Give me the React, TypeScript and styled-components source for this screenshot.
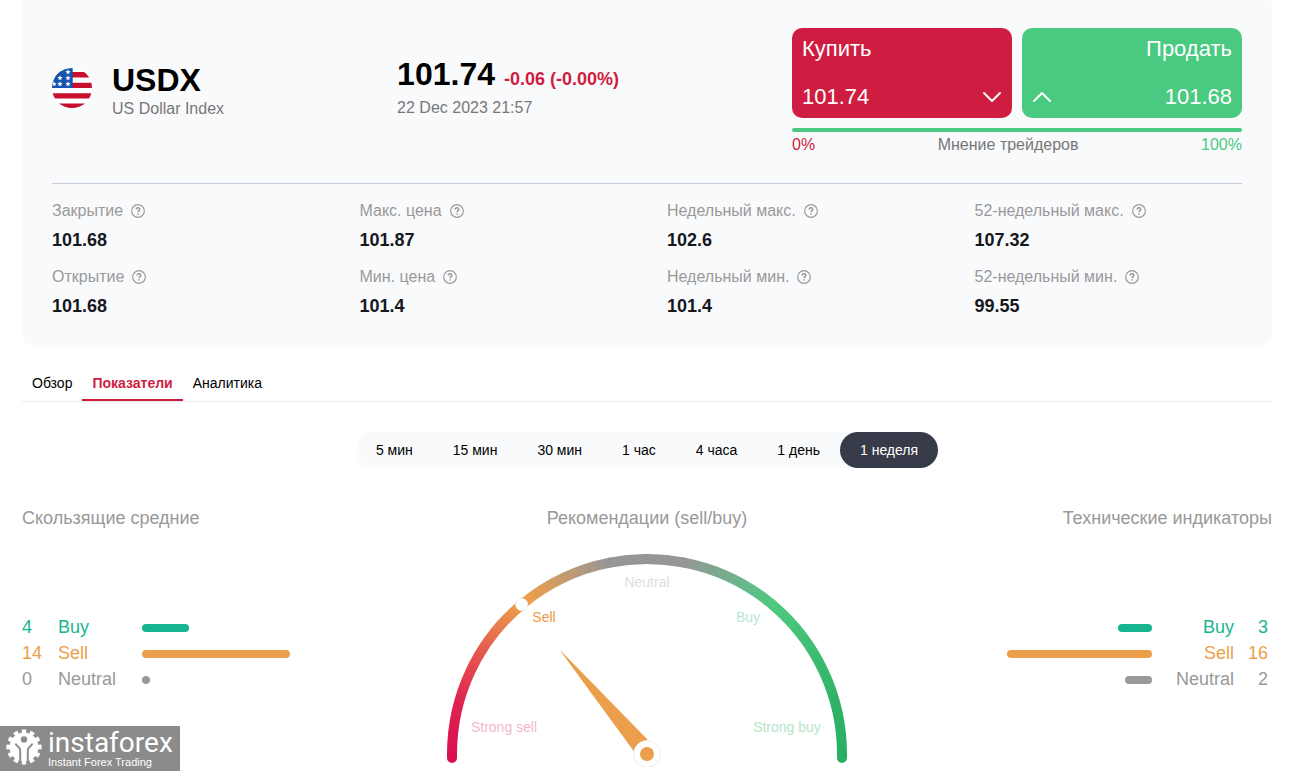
import React from "react";
import styled, { createGlobalStyle } from "styled-components";

const GlobalStyle = createGlobalStyle`
  *, *::before, *::after { box-sizing: border-box; }
  body {
    margin: 0;
    background: #fff;
    color: #000;
    font-family: "Liberation Sans", Arial, sans-serif;
    font-size: 16px;
  }
  h1, h2, p, dl, dd, ul { margin: 0; padding: 0; }
  button { font-family: inherit; border: 0; cursor: pointer; }
`;

const colors = {
  red: "#cf1d41",
  green: "#4ac981",
  teal: "#18b690",
  orange: "#ec9f4b",
  grey: "#999999",
  panel: "#f9fafc",
  dark: "#373a48",
};

const Page = styled.main`
  padding: 0 17px 0 22px;
`;

const Card = styled.section`
  padding: 28px 30px 29px;
  border-radius: 4px 4px 10px 10px;
  background: ${colors.panel};
`;

const CardHeader = styled.header`
  display: grid;
  grid-template-columns: 29% 1fr 450px;
  padding-bottom: 29px;
  border-bottom: 1px solid #c9cbdb;
`;

const Instrument = styled.div`
  display: flex;
  gap: 20px;
  padding-top: 36px;
`;

const Flag = styled.svg`
  width: 40px;
  height: 40px;
  margin-top: 4px;
`;

const Symbol = styled.h1`
  font-size: 32px;
  line-height: 32px;
`;

const Muted = styled.p<{ $gap: number }>`
  margin-top: ${(p) => p.$gap}px;
  line-height: 20px;
  color: #777;
`;

const Quote = styled.div`
  padding-top: 30px;
`;

const PriceLine = styled.div`
  display: flex;
  align-items: baseline;
  gap: 9px;
`;

const Price = styled.strong`
  font-size: 32px;
  line-height: 32px;
`;

const Change = styled.strong`
  font-size: 18px;
  line-height: 20px;
  color: ${colors.red};
`;

const DealButtons = styled.div`
  display: grid;
  grid-template-columns: 1fr 1fr;
  gap: 10px;
`;

const DealButton = styled.button<{ $side: "buy" | "sell" }>`
  display: flex;
  flex-direction: column;
  justify-content: space-between;
  align-items: ${(p) => (p.$side === "buy" ? "flex-start" : "flex-end")};
  height: 90px;
  padding: 9px 10px;
  border-radius: 10px;
  background: ${(p) => (p.$side === "buy" ? colors.red : colors.green)};
  color: #fff;
  font-size: 22px;
  line-height: 24px;
`;

const DealBottom = styled.span<{ $side: "buy" | "sell" }>`
  display: flex;
  flex-direction: ${(p) => (p.$side === "buy" ? "row" : "row-reverse")};
  align-items: center;
  justify-content: space-between;
  width: 100%;
`;

const OpinionBar = styled.div`
  height: 4px;
  margin-top: 10px;
  border-radius: 2px;
  background: ${colors.green};
`;

const OpinionLegend = styled.div`
  display: flex;
  justify-content: space-between;
  margin-top: 4px;
  line-height: 18px;
  color: #777;
`;

const Percent = styled.span<{ $color: string }>`
  color: ${(p) => p.$color};
`;

const Stats = styled.dl`
  display: grid;
  grid-template-columns: repeat(4, 1fr);
  gap: 18px 40px;
  padding-top: 18px;
`;

const StatLabel = styled.dt`
  display: flex;
  align-items: center;
  gap: 8px;
  line-height: 18px;
  color: ${colors.grey};
  white-space: nowrap;
`;

const StatValue = styled.dd`
  margin-top: 10px;
  font-size: 18px;
  font-weight: 700;
  line-height: 20px;
  color: #16181d;
`;

const Tabs = styled.nav`
  display: flex;
  margin-top: 28px;
  border-bottom: 1px solid #ececee;
`;

const Tab = styled.a<{ $active?: boolean }>`
  padding: 0 10px 6px;
  border-bottom: 2px solid ${(p) => (p.$active ? colors.red : "transparent")};
  color: ${(p) => (p.$active ? colors.red : "#000")};
  font-size: 14px;
  font-weight: ${(p) => (p.$active ? 700 : 400)};
  line-height: 20px;
  text-decoration: none;
`;

const Periods = styled.div`
  display: flex;
  width: fit-content;
  margin: 30px auto 0;
  border-radius: 18px;
  background: ${colors.panel};
`;

const Period = styled.button<{ $active?: boolean }>`
  height: 36px;
  padding: 0 20px;
  border-radius: 18px;
  background: ${(p) => (p.$active ? colors.dark : "transparent")};
  color: ${(p) => (p.$active ? "#fff" : "#000")};
  font-size: 14px;
`;

const Indicators = styled.section`
  display: grid;
  grid-template-columns: 1fr 400px 1fr;
  margin-top: 40px;
`;

const Column = styled.div<{ $align: "left" | "center" | "right" }>`
  text-align: ${(p) => p.$align};
`;

const Heading = styled.h2`
  font-size: 18px;
  font-weight: 400;
  line-height: 20px;
  color: ${colors.grey};
`;

const Votes = styled.ul`
  margin-top: 86px;
  list-style: none;
`;

const Vote = styled.li<{ $color: string; $mirrored?: boolean }>`
  display: flex;
  flex-direction: ${(p) => (p.$mirrored ? "row-reverse" : "row")};
  align-items: center;
  padding: ${(p) => (p.$mirrored ? "0 4px 0 0" : "0")};
  color: ${(p) => p.$color};
  font-size: 18px;
  line-height: 26px;
`;

const VoteCount = styled.span<{ $mirrored?: boolean }>`
  width: ${(p) => (p.$mirrored ? 34 : 36)}px;
`;

const VoteName = styled.span<{ $mirrored?: boolean }>`
  width: ${(p) => (p.$mirrored ? 82 : 84)}px;
`;

const VoteBar = styled.span`
  height: 8px;
  margin-top: 2px;
  border-radius: 4px;
  background: currentColor;
`;

const Gauge = styled.svg`
  display: block;
  width: 400px;
  height: 213px;
  margin-top: 26px;
  font-size: 14px;
`;

const Brand = styled.a`
  position: fixed;
  left: 0;
  bottom: 0;
  display: flex;
  gap: 6px;
  width: 180px;
  height: 45px;
  padding: 3px 0 0 6px;
  background: #8b8b8b;
  color: #fff;
  text-decoration: none;
`;

const BrandText = styled.span`
  display: flex;
  flex-direction: column;
`;

const BrandName = styled.span`
  font-family: Roboto, sans-serif;
  font-size: 28px;
  line-height: 28px;
`;

const BrandTagline = styled.span`
  font-size: 11px;
  line-height: 10px;
`;

const stats = [
  ["Закрытие", "101.68"],
  ["Макс. цена", "101.87"],
  ["Недельный макс.", "102.6"],
  ["52-недельный макс.", "107.32"],
  ["Открытие", "101.68"],
  ["Мин. цена", "101.4"],
  ["Недельный мин.", "101.4"],
  ["52-недельный мин.", "99.55"],
];

const periods = ["5 мин", "15 мин", "30 мин", "1 час", "4 часа", "1 день", "1 неделя"];

type VoteItem = { name: string; count: number; color: string; width: number };

const averages: VoteItem[] = [
  { name: "Buy", count: 4, color: colors.teal, width: 47 },
  { name: "Sell", count: 14, color: colors.orange, width: 148 },
  { name: "Neutral", count: 0, color: colors.grey, width: 8 },
];

const technical: VoteItem[] = [
  { name: "Buy", count: 3, color: colors.teal, width: 34 },
  { name: "Sell", count: 16, color: colors.orange, width: 145 },
  { name: "Neutral", count: 2, color: colors.grey, width: 27 },
];

const stars = [
  [16, 4],
  [8, 10],
  [16, 10],
  [2, 16],
  [8, 16],
  [16, 16],
];

const UsFlag = () => (
  <Flag viewBox="0 0 40 40" role="img" aria-label="USA">
    <clipPath id="flag-clip">
      <circle cx="20" cy="20" r="20" />
    </clipPath>
    <g clipPath="url(#flag-clip)">
      <rect width="40" height="40" fill="#fff" />
      <path d="M0 4h40v5.4H0zM0 14.8h40v5.2H0zM0 25.2h40v5.2H0zM0 35.4h40V40H0z" fill="#c8102e" />
      <rect width="20.7" height="20" fill="#1254b0" />
      {stars.map(([x, y]) => (
        <path
          key={`${x}-${y}`}
          transform={`translate(${x} ${y})`}
          d="M0-2.7.75-.9 2.6-.8 1.2.4 1.65 2.3 0 1.3-1.65 2.3-1.2.4-2.6-.8-.75-.9z"
          fill="#fff"
        />
      ))}
    </g>
  </Flag>
);

const HelpIcon = () => (
  <svg width="14" height="14" viewBox="0 0 15 15" fill="none" stroke="#999" aria-hidden="true">
    <circle cx="7.5" cy="7.5" r="6.8" strokeWidth="1.2" />
    <path d="M5.6 6c0-1.3.8-1.9 1.9-1.9s1.9.7 1.9 1.7c0 1.3-1.7 1.3-1.8 2.9" strokeWidth="1.6" />
    <path d="M7.6 9.8v1.5" strokeWidth="1.7" />
  </svg>
);

const Chevron = ({ up }: { up?: boolean }) => (
  <svg width="20" height="12" viewBox="0 0 20 12" fill="none" stroke="#fff" strokeWidth="2" strokeLinecap="round" strokeLinejoin="round" aria-hidden="true">
    <path d={up ? "M2 10l8-8 8 8" : "M2 2l8 8 8-8"} />
  </svg>
);

const VoteList = ({ items, mirrored }: { items: VoteItem[]; mirrored?: boolean }) => (
  <Votes>
    {items.map((item) => (
      <Vote key={item.name} $color={item.color} $mirrored={mirrored}>
        <VoteCount $mirrored={mirrored}>{item.count}</VoteCount>
        <VoteName $mirrored={mirrored}>{item.name}</VoteName>
        <VoteBar style={{ width: item.width }} />
      </Vote>
    ))}
  </Votes>
);

const SentimentGauge = () => (
  <Gauge viewBox="0 0 400 213" role="img" aria-label="Sell">
    <defs>
      <linearGradient id="g-strong-sell" gradientUnits="userSpaceOnUse" x1="5" y1="200" x2="74.7" y2="50.6">
        <stop offset="0" stopColor="#dc0f50" />
        <stop offset="0.3" stopColor="#de2450" />
        <stop offset="0.65" stopColor="#e55c4f" />
        <stop offset="1" stopColor="#ec9f4b" />
      </linearGradient>
      <linearGradient id="g-sell" gradientUnits="userSpaceOnUse" x1="74.7" y1="50.6" x2="162.8" y2="8.6">
        <stop offset="0.1" stopColor="#ec9f4b" />
        <stop offset="1" stopColor="#969696" />
      </linearGradient>
      <linearGradient id="g-buy" gradientUnits="userSpaceOnUse" x1="237.2" y1="8.6" x2="325.3" y2="50.6">
        <stop offset="0" stopColor="#969696" />
        <stop offset="1" stopColor="#4ec982" />
      </linearGradient>
      <linearGradient id="g-strong-buy" gradientUnits="userSpaceOnUse" x1="325.3" y1="50.6" x2="395" y2="200">
        <stop offset="0" stopColor="#4ec982" />
        <stop offset="0.7" stopColor="#2fb266" />
        <stop offset="1" stopColor="#2bb063" />
      </linearGradient>
    </defs>
    <g fill="none" strokeWidth="10" strokeLinecap="round">
      <path d="M5 204V200A195 195 0 0 1 74.7 50.6" stroke="url(#g-strong-sell)" />
      <path d="M395 204V200A195 195 0 0 0 325.3 50.6" stroke="url(#g-strong-buy)" />
      <path d="M74.7 50.6A195 195 0 0 1 162.8 8.6" stroke="url(#g-sell)" />
      <path d="M325.3 50.6A195 195 0 0 0 237.2 8.6" stroke="url(#g-buy)" />
      <path d="M162.8 8.6A195 195 0 0 1 237.2 8.6" stroke="#969696" />
    </g>
    <circle cx="74.7" cy="50.5" r="6.2" fill="#fff" stroke="#dfe3ea" strokeWidth="0.6" />
    <path d="M112 95L200.500 185.500 187 197.500z" fill="#ec9f4b" />
    <circle cx="200" cy="200" r="13.500" fill="#fff" stroke="#e6e6e6" strokeWidth="0.8" />
    <circle cx="200" cy="200" r="7" fill="#ec9f4b" />
    <g textAnchor="middle">
      <text x="200" y="33" fill="#dedede">Neutral</text>
      <text x="97" y="68" fill="#ec9a3f">Sell</text>
      <text x="301" y="68" fill="#b5e8d9">Buy</text>
      <text x="57" y="178" fill="#f6b7cb">Strong sell</text>
      <text x="340" y="178" fill="#b6e6c9">Strong buy</text>
    </g>
  </Gauge>
);

const GearMark = () => (
  <svg width="36" height="36" viewBox="0 0 36 36" aria-hidden="true">
    <circle cx="18" cy="18" r="14.5" fill="#fff" />
    <circle cx="18" cy="18" r="15.6" fill="none" stroke="#fff" strokeWidth="4" strokeDasharray="1.1 0.9" strokeDashoffset="0.55" pathLength={24} />
    <circle cx="18" cy="10.5" r="3.2" fill="#8b8b8b" />
    <path d="M9.500 14.500c1 3 4.700 3 4.700 7V36M26.500 14.500c-1 3-4.700 3-4.700 7V36" fill="none" stroke="#8b8b8b" strokeWidth="2" />
  </svg>
);

export default function App() {
  return (
    <>
      <GlobalStyle />
      <Page>
        <Card>
          <CardHeader>
            <Instrument>
              <UsFlag />
              <div>
                <Symbol>USDX</Symbol>
                <Muted $gap={3}>US Dollar Index</Muted>
              </div>
            </Instrument>
            <Quote>
              <PriceLine>
                <Price>101.74</Price>
                <Change>-0.06 (-0.00%)</Change>
              </PriceLine>
              <Muted $gap={8}>22 Dec 2023 21:57</Muted>
            </Quote>
            <div>
              <DealButtons>
                <DealButton type="button" $side="buy">
                  <span>Купить</span>
                  <DealBottom $side="buy">
                    <span>101.74</span>
                    <Chevron />
                  </DealBottom>
                </DealButton>
                <DealButton type="button" $side="sell">
                  <span>Продать</span>
                  <DealBottom $side="sell">
                    <span>101.68</span>
                    <Chevron up />
                  </DealBottom>
                </DealButton>
              </DealButtons>
              <OpinionBar />
              <OpinionLegend>
                <Percent $color={colors.red}>0%</Percent>
                <span>Мнение трейдеров</span>
                <Percent $color={colors.green}>100%</Percent>
              </OpinionLegend>
            </div>
          </CardHeader>
          <Stats>
            {stats.map(([label, value]) => (
              <div key={label}>
                <StatLabel>
                  {label}
                  <HelpIcon />
                </StatLabel>
                <StatValue>{value}</StatValue>
              </div>
            ))}
          </Stats>
        </Card>

        <Tabs>
          <Tab href="#overview">Обзор</Tab>
          <Tab href="#indicators" $active aria-current="page">Показатели</Tab>
          <Tab href="#analytics">Аналитика</Tab>
        </Tabs>

        <Periods>
          {periods.map((period) => (
            <Period key={period} type="button" $active={period === "1 неделя"}>
              {period}
            </Period>
          ))}
        </Periods>

        <Indicators>
          <Column $align="left">
            <Heading>Скользящие средние</Heading>
            <VoteList items={averages} />
          </Column>
          <Column $align="center">
            <Heading>Рекомендации (sell/buy)</Heading>
            <SentimentGauge />
          </Column>
          <Column $align="right">
            <Heading>Технические индикаторы</Heading>
            <VoteList items={technical} mirrored />
          </Column>
        </Indicators>
      </Page>

      <Brand href="#home">
        <GearMark />
        <BrandText>
          <BrandName>instaforex</BrandName>
          <BrandTagline>Instant Forex Trading</BrandTagline>
        </BrandText>
      </Brand>
    </>
  );
}
